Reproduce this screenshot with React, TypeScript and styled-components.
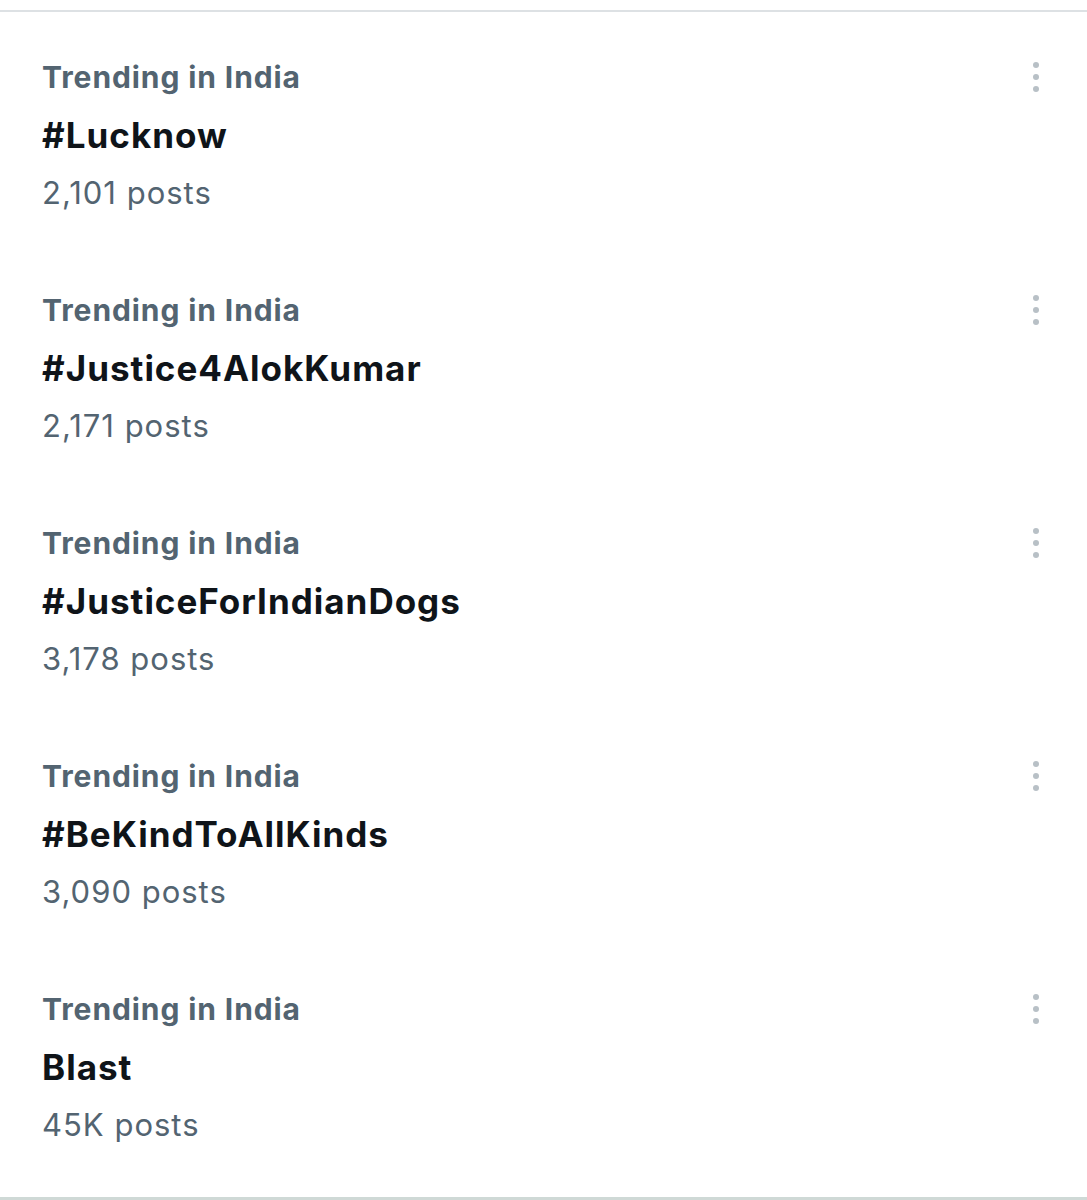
import React from "react";
import styled, { createGlobalStyle } from "styled-components";

interface TrendTypes {
  topic: string;
  posts: string;
}

const trends: TrendTypes[] = [
  { topic: "#Lucknow", posts: "2,101 posts" },
  { topic: "#Justice4AlokKumar", posts: "2,171 posts" },
  { topic: "#JusticeForIndianDogs", posts: "3,178 posts" },
  { topic: "#BeKindToAllKinds", posts: "3,090 posts" },
  { topic: "Blast", posts: "45K posts" },
];

const GlobalStyle = createGlobalStyle`
  html, body {
    margin: 0;
    padding: 0;
    background: #fff;
    font-family: Inter, "Open Sans", Roboto, sans-serif;
  }
`;

const PageStyled = styled.div`
  width: 1087px;
  height: 1200px;
  padding-top: 10px;
  box-sizing: border-box;
  background: #fff;
`;

const ListStyled = styled.div`
  border-top: 2px solid #dde1e4;
  border-bottom: 3px solid #cfd9d6;
  padding-bottom: 20px;
`;

const TrendRowStyled = styled.div`
  height: 233px;
  box-sizing: border-box;
  padding: 45px 42px 0 42px;
  display: flex;
  justify-content: space-between;
  align-items: flex-start;
`;

const TrendTextStyled = styled.div`
  display: flex;
  flex-direction: column;
  gap: 16px;
`;

const LabelStyled = styled.div`
  font-size: 30px;
  line-height: 40px;
  font-weight: 700;
  letter-spacing: 0.9px;
  color: #536471;
`;

const TopicStyled = styled.div`
  font-size: 35px;
  line-height: 44px;
  font-weight: 700;
  letter-spacing: 1px;
  color: #0f1419;
`;

const PostsStyled = styled.div`
  font-size: 31px;
  line-height: 40px;
  font-weight: 400;
  letter-spacing: 1px;
  color: #536471;
`;

const MoreStyled = styled.div`
  display: flex;
  flex-direction: column;
  align-items: center;
  gap: 6px;
  margin-top: 5px;
  margin-right: 6px;
`;

const DotStyled = styled.span`
  width: 6px;
  height: 6px;
  border-radius: 50%;
  background: #b8c0c6;
`;

const App: React.FC = () => {
  return (
    <PageStyled>
      <GlobalStyle />
      <ListStyled>
        {trends.map((trend, index) => (
          <TrendRowStyled key={index}>
            <TrendTextStyled>
              <LabelStyled>Trending in India</LabelStyled>
              <TopicStyled>{trend.topic}</TopicStyled>
              <PostsStyled>{trend.posts}</PostsStyled>
            </TrendTextStyled>
            <MoreStyled>
              <DotStyled />
              <DotStyled />
              <DotStyled />
            </MoreStyled>
          </TrendRowStyled>
        ))}
      </ListStyled>
    </PageStyled>
  );
};

export default App;
